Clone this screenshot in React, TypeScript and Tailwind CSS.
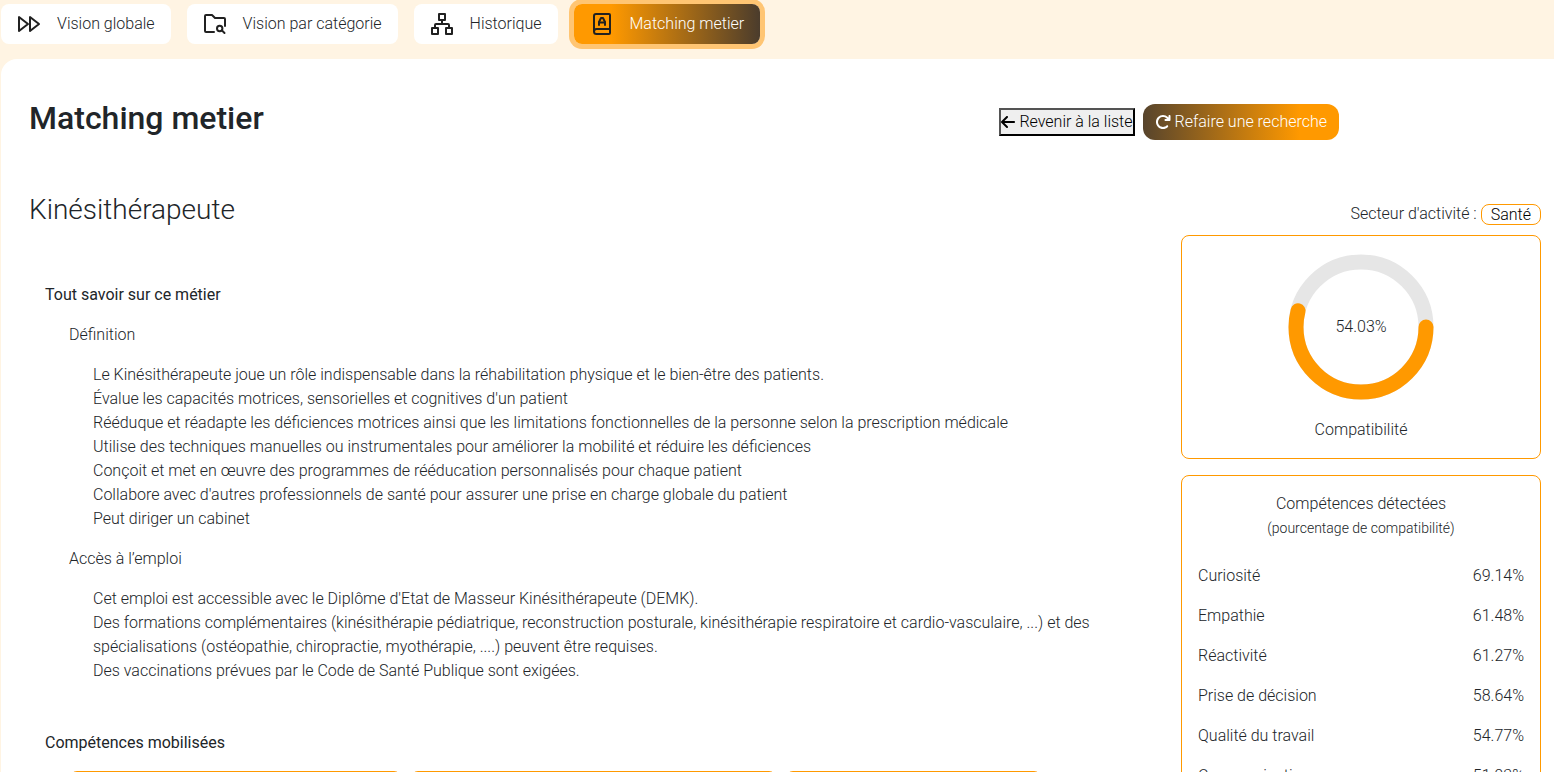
import { FaArrowLeft, FaArrowRotateRight } from 'react-icons/fa6'

const definition = [
  'Le Kinésithérapeute joue un rôle indispensable dans la réhabilitation physique et le bien-être des patients.',
  "Évalue les capacités motrices, sensorielles et cognitives d'un patient",
  'Rééduque et réadapte les déficiences motrices ainsi que les limitations fonctionnelles de la personne selon la prescription médicale',
  'Utilise des techniques manuelles ou instrumentales pour améliorer la mobilité et réduire les déficiences',
  'Conçoit et met en œuvre des programmes de rééducation personnalisés pour chaque patient',
  "Collabore avec d'autres professionnels de santé pour assurer une prise en charge globale du patient",
  'Peut diriger un cabinet',
]

const acces = [
  "Cet emploi est accessible avec le Diplôme d'Etat de Masseur Kinésithérapeute (DEMK).",
  'Des formations complémentaires (kinésithérapie pédiatrique, reconstruction posturale, kinésithérapie respiratoire et cardio-vasculaire, ...) et des spécialisations (ostéopathie, chiropractie, myothérapie, ....) peuvent être requises.',
  'Des vaccinations prévues par le Code de Santé Publique sont exigées.',
]

const competences = [
  { label: 'Curiosité', score: 69.14 },
  { label: 'Empathie', score: 61.48 },
  { label: 'Réactivité', score: 61.27 },
  { label: 'Prise de décision', score: 58.64 },
  { label: 'Qualité du travail', score: 54.77 },
  { label: 'Communication', score: 51.93 },
]

// Tracés des icônes d'onglet, sur une grille de 24
const icons = {
  forward: ['M2 5v14l9-7z', 'M13 5v14l9-7z'],
  folder: [
    'M11 20H3a1 1 0 0 1-1-1V4a1 1 0 0 1 1-1h6l3 3h9a1 1 0 0 1 1 1v7',
    'M14 16.500a2.700 2.700 0 1 0 5.400 0a2.700 2.700 0 1 0-5.400 0',
    'M19 18.500l2.500 2.500',
  ],
  sitemap: [
    'M9 2h6v6H9z',
    'M2 16h6v6H2z',
    'M16 16h6v6h-6z',
    'M5 16v-3a1 1 0 0 1 1-1h12a1 1 0 0 1 1 1v3',
    'M12 8v4',
  ],
  book: [
    'M4 19.500V4a2 2 0 0 1 2-2h13a1 1 0 0 1 1 1v18a1 1 0 0 1-1 1H6.500a2.500 2.500 0 0 1 0-5H20',
    'M9 13v-3l2-4h2l2 4v3',
    'M9 10.500h6',
  ],
}

function TabIcon({ name }: { name: keyof typeof icons }) {
  return (
    <svg viewBox="0 0 24 24" className="size-6 text-[#212121]" fill="none" stroke="currentColor" strokeWidth="2" strokeLinecap="round" strokeLinejoin="round" aria-hidden="true">
      {icons[name].map((d) => (
        <path key={d} d={d} />
      ))}
    </svg>
  )
}

const tabs: { label: string; icon: keyof typeof icons; active?: boolean }[] = [
  { label: 'Vision globale', icon: 'forward' },
  { label: 'Vision par catégorie', icon: 'folder' },
  { label: 'Historique', icon: 'sitemap' },
  { label: 'Matching metier', icon: 'book', active: true },
]

function Gauge({ value }: { value: number }) {
  return (
    <div className="grid place-items-center">
      <svg viewBox="0 0 150 150" className="col-start-1 row-start-1 size-[150px]" fill="none" strokeWidth="15">
        <circle cx="75" cy="75" r="65" stroke="#e6e6e6" />
        <circle cx="75" cy="75" r="65" stroke="#ff9900" strokeLinecap="round" pathLength="100" strokeDasharray={`${value} 100`} />
      </svg>
      <span className="col-start-1 row-start-1">{value}%</span>
    </div>
  )
}

function TextBlock({ title, lines }: { title: string; lines: string[] }) {
  return (
    <div className="mt-4 pl-6">
      <h4>{title}</h4>
      <div className="mt-4 pl-6">
        {lines.map((line) => (
          <p key={line}>{line}</p>
        ))}
      </div>
    </div>
  )
}

export default function App() {
  return (
    <div className="h-screen overflow-hidden bg-[#fff4e3] pl-px font-['Roboto',sans-serif] text-base font-light text-[#212529]">
      <nav className="flex gap-4 pt-1">
        {tabs.map((tab) => (
          <button
            key={tab.label}
            type="button"
            className={
              tab.active
                ? 'flex h-10 items-center gap-4 rounded-lg bg-[linear-gradient(90deg,#ff9900_20%,#4b3c2c)] px-4 text-white ring-[5px] ring-[#ffc573]'
                : 'flex h-10 items-center gap-4 rounded-lg bg-white px-4'
            }
          >
            <TabIcon name={tab.icon} />
            {tab.label}
          </button>
        ))}
      </nav>

      <main className="mt-[15px] min-h-screen rounded-tl-2xl bg-white pt-10 pr-[13px] pl-7">
        <header className="flex items-start justify-between pr-[202px]">
          <h1 className="text-[32px] leading-[38px] font-medium">Matching metier</h1>
          <div className="mt-[5px] flex items-center gap-2">
            <button type="button" className="flex items-center gap-1 border-2 border-black bg-[#efefef] text-black [border-style:outset]">
              <FaArrowLeft className="h-4 w-3.5" />
              Revenir à la liste
            </button>
            <button type="button" className="flex items-center gap-1 rounded-xl bg-[linear-gradient(90deg,#57442c,#ff9900_80%)] px-3 py-1.5 text-white">
              <FaArrowRotateRight className="size-4" />
              Refaire une recherche
            </button>
          </div>
        </header>

        <div className="mt-13 flex gap-4">
          <section className="min-w-0 flex-1">
            <h2 className="text-[28px] leading-9">Kinésithérapeute</h2>
            <div className="mt-[55px] pl-4">
              <h3 className="font-normal">Tout savoir sur ce métier</h3>
              <TextBlock title="Définition" lines={definition} />
              <TextBlock title="Accès à l’emploi" lines={acces} />
            </div>
            <div className="mt-12 pl-4">
              <h3 className="font-normal">Compétences mobilisées</h3>
              <div className="mt-4 flex gap-2 pl-6">
                <div className="h-40 w-[333px] rounded-lg border border-[#ff9900]" />
                <div className="h-40 w-[367px] rounded-lg border border-[#ff9900]" />
                <div className="h-40 w-[257px] rounded-lg border border-[#ff9900]" />
              </div>
            </div>
          </section>

          <aside className="w-[360px] pt-[10px]">
            <p className="flex items-center justify-end gap-1">
              Secteur d'activité :
              <span className="rounded-lg border border-[#ff9900] px-[9px] leading-[19px] text-black">Santé</span>
            </p>
            <div className="mt-[9px] rounded-lg border border-[#ff9900] p-4 text-center">
              <Gauge value={54.03} />
              <p className="mt-4">Compatibilité</p>
            </div>
            <div className="mt-4 rounded-lg border border-[#ff9900] p-4">
              <p className="text-center">Compétences détectées</p>
              <p className="text-center text-sm leading-6">(pourcentage de compatibilité)</p>
              <ul className="mt-6 space-y-4">
                {competences.map((c) => (
                  <li key={c.label} className="flex justify-between">
                    <span>{c.label}</span>
                    <span>{c.score.toFixed(2)}%</span>
                  </li>
                ))}
              </ul>
            </div>
          </aside>
        </div>
      </main>
    </div>
  )
}
